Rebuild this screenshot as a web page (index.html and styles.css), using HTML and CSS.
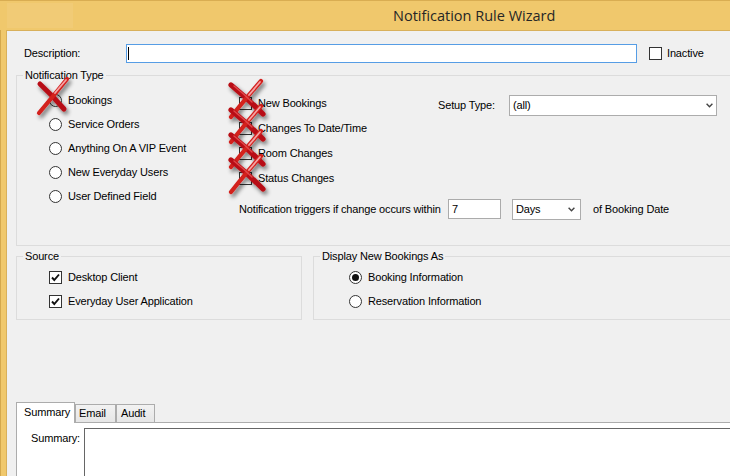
FILE: index.html
```html
<!DOCTYPE html>
<html>
<head>
<meta charset="utf-8">
<title>Notification Rule Wizard</title>
<link rel="stylesheet" href="styles.css">
</head>
<body>
<div class="window">
  <div class="titlebar">
    <div class="title-ghost"></div>
    <span class="title">Notification Rule Wizard</span>
  </div>
  <div class="main">
    <div class="frame"></div>
    <div class="content">
      <div class="desc-row">
        <span class="desc-label">Description:</span>
        <div class="textbox focus"><span class="caret"></span></div>
        <span class="cb inactive-cb"></span>
        <span class="inactive-lbl">Inactive</span>
      </div>

      <fieldset class="group notif">
        <legend>Notification Type</legend>
        <div class="notif-inner">
          <div class="radio-col">
            <div class="opt"><span class="rb"></span><span class="opt-lbl">Bookings</span></div>
            <div class="opt"><span class="rb"></span><span class="opt-lbl">Service Orders</span></div>
            <div class="opt"><span class="rb"></span><span class="opt-lbl">Anything On A VIP Event</span></div>
            <div class="opt"><span class="rb"></span><span class="opt-lbl">New Everyday Users</span></div>
            <div class="opt"><span class="rb"></span><span class="opt-lbl">User Defined Field</span></div>
          </div>
          <div class="right-col">
            <div class="right-top">
              <div class="check-col">
                <div class="opt"><span class="cb"></span><span class="opt-lbl">New Bookings</span></div>
                <div class="opt"><span class="cb"></span><span class="opt-lbl">Changes To Date/Time</span></div>
                <div class="opt"><span class="cb"></span><span class="opt-lbl">Room Changes</span></div>
                <div class="opt"><span class="cb"></span><span class="opt-lbl">Status Changes</span></div>
              </div>
              <div class="setup">
                <span class="setup-label">Setup Type:</span>
                <div class="select setup-select">
                  <span>(all)</span>
                  <svg class="chev" width="7" height="5" viewBox="0 0 7 5"><path d="M0.6 0.8 L3.5 3.8 L6.4 0.8" fill="none" stroke="#444" stroke-width="1.4"/></svg>
                </div>
              </div>
            </div>
            <div class="trigger">
              <span class="trig-label">Notification triggers if change occurs within</span>
              <div class="num">7</div>
              <div class="select days">
                <span>Days</span>
                <svg class="chev" width="7" height="5" viewBox="0 0 7 5"><path d="M0.6 0.8 L3.5 3.8 L6.4 0.8" fill="none" stroke="#444" stroke-width="1.4"/></svg>
              </div>
              <span class="of-lbl">of Booking Date</span>
            </div>
          </div>
        </div>
      </fieldset>

      <div class="groups-row">
        <fieldset class="group source">
          <legend>Source</legend>
          <div class="group-body source-body">
            <div class="opt"><span class="cb"><svg width="11" height="11" viewBox="0 0 11 11"><path d="M2 5.5 L4.3 8 L9 2.5" fill="none" stroke="#111" stroke-width="1.9"/></svg></span><span class="opt-lbl">Desktop Client</span></div>
            <div class="opt"><span class="cb"><svg width="11" height="11" viewBox="0 0 11 11"><path d="M2 5.5 L4.3 8 L9 2.5" fill="none" stroke="#111" stroke-width="1.9"/></svg></span><span class="opt-lbl">Everyday User Application</span></div>
          </div>
        </fieldset>
        <fieldset class="group display">
          <legend>Display New Bookings As</legend>
          <div class="group-body display-body">
            <div class="opt"><span class="rb on"></span><span class="opt-lbl">Booking Information</span></div>
            <div class="opt"><span class="rb"></span><span class="opt-lbl">Reservation Information</span></div>
          </div>
        </fieldset>
      </div>

      <div class="tabs">
        <div class="tab-strip">
          <div class="tab sel">Summary</div>
          <div class="tab email">Email</div>
          <div class="tab audit">Audit</div>
        </div>
        <div class="tab-panel">
          <span class="sum-label">Summary:</span>
          <div class="textarea"></div>
        </div>
      </div>
    </div>
  </div>
</div>

<svg class="marks" width="730" height="476" viewBox="0 0 730 476">
  <defs>
    <filter id="sh" x="-30%" y="-30%" width="180%" height="180%">
      <feGaussianBlur in="SourceAlpha" stdDeviation="2"/>
      <feOffset dx="2" dy="3" result="b"/>
      <feComponentTransfer><feFuncA type="linear" slope="0.55"/></feComponentTransfer>
      <feMerge><feMergeNode/><feMergeNode in="SourceGraphic"/></feMerge>
    </filter>
    <g id="cx">
      <path d="M231 85 Q247 98 263 114" stroke="#b80f17" stroke-width="5.2"/>
      <path d="M261 81 Q247 97 231 117" stroke="#d3201f" stroke-width="4.2"/>
      <path d="M260 82 Q254 89 249 95" stroke="#f5a3a3" stroke-width="1.8"/>
      <path d="M234 86 Q244 94 252 102" stroke="#e2484a" stroke-width="1.4"/>
    </g>
  </defs>
  <g filter="url(#sh)" fill="none" stroke-linecap="round">
    <path d="M40 84 Q52 95 64 109" stroke="#b80f17" stroke-width="5"/>
    <path d="M67 79 Q55 94 39 113" stroke="#d3201f" stroke-width="4.2"/>
    <path d="M66 80 Q60 87 55 93" stroke="#f5a3a3" stroke-width="1.8"/>
    <use href="#cx"/>
    <use href="#cx" y="25"/>
    <use href="#cx" y="50"/>
    <use href="#cx" y="75"/>
  </g>
</svg>
</body>
</html>
```

FILE: styles.css
```css
* { box-sizing: border-box; }
html, body { margin: 0; padding: 0; }
body {
  position: relative;
  width: 730px;
  height: 476px;
  overflow: hidden;
  font: 11px/13px "Liberation Sans", Arial, sans-serif;
  letter-spacing: -0.15px;
  color: #000;
  background: #f0c86c;
}
.window {
  width: 730px;
  height: 476px;
  display: flex;
  flex-direction: column;
  background: #f0c86c;
  border-top: 1px solid #d9ad52;
}
.titlebar {
  height: 29px;
  flex-shrink: 0;
  display: flex;
  align-items: center;
}
.title-ghost {
  width: 66px;
  height: 25px;
  margin-left: 7px;
  background: rgba(255, 255, 255, 0.07);
}
.title {
  margin-left: 320px;
  font: 14.5px "Open Sans", "Liberation Sans", sans-serif;
  letter-spacing: 0;
  color: #262626;
  white-space: nowrap;
}
.main {
  flex: 1;
  display: flex;
  min-height: 0;
}
.frame {
  width: 6px;
  flex-shrink: 0;
  border-left: 1px solid #d4a84c;
  background: #f0c86c;
}
.content {
  flex: 1;
  min-width: 0;
  background: #f0f0f0;
  border-left: 1px solid #d8b05b;
  border-top: 1px solid #d8b05b;
  overflow: hidden;
  display: flex;
  flex-direction: column;
}
.desc-row {
  flex-shrink: 0;
  display: flex;
  align-items: center;
  height: 19px;
  margin-top: 13px;
  padding-left: 17px;
}
.desc-label { width: 102px; flex-shrink: 0; }
.textbox {
  width: 511px;
  height: 19px;
  flex-shrink: 0;
  border: 1px solid #7a7a7a;
  background: #fff;
}
.textbox.focus {
  border-color: #569de5;
  display: flex;
  align-items: center;
  padding-left: 1px;
}
.caret { width: 1px; height: 13px; background: #000; }
.inactive-cb { margin-left: 12px; }
.inactive-lbl { margin-left: 5px; }

.cb {
  width: 13px;
  height: 13px;
  flex-shrink: 0;
  border: 1px solid #333;
  background: #fff;
  display: flex;
  align-items: center;
  justify-content: center;
}
.rb {
  width: 13px;
  height: 13px;
  flex-shrink: 0;
  border: 1px solid #333;
  border-radius: 50%;
  background: #fff;
  display: flex;
  align-items: center;
  justify-content: center;
}
.rb.on::after {
  content: "";
  width: 7px;
  height: 7px;
  border-radius: 50%;
  background: #111;
}
.opt { display: flex; align-items: center; height: 24px; white-space: nowrap; }
.opt-lbl { margin-left: 6px; }

fieldset.group {
  margin: 0;
  padding: 0;
  min-width: 0;
  border: 1px solid #dcdcdc;
  flex-shrink: 0;
}
fieldset.group legend {
  margin-left: 6px;
  padding: 0 2px;
  line-height: 13px;
}
.notif {
  margin: 6px 0 0 9px !important;
  width: 740px;
  height: 177px;
}
.notif-inner {
  display: flex;
  padding-top: 6px;
  padding-left: 32px;
}
.radio-col { width: 190px; flex-shrink: 0; display: flex; flex-direction: column; }
.right-col { display: flex; flex-direction: column; }
.right-top { display: flex; align-items: flex-start; }
.check-col {
  width: 199px;
  flex-shrink: 0;
  padding-top: 3px;
  display: flex;
  flex-direction: column;
}
.check-col .opt { height: 25px; }
.setup { display: flex; align-items: center; margin-top: 7px; }
.setup-label { width: 71px; flex-shrink: 0; }
.select {
  height: 21px;
  flex-shrink: 0;
  border: 1px solid #acacac;
  background: #fff;
  display: flex;
  align-items: center;
  justify-content: space-between;
  padding: 0 3px 0 3px;
}
.setup-select { width: 208px; }
.chev { display: block; }
.trigger { display: flex; align-items: flex-start; margin-top: 8px; white-space: nowrap; }
.trig-label { width: 209px; flex-shrink: 0; line-height: 20px; }
.num {
  width: 53px;
  height: 20px;
  flex-shrink: 0;
  border: 1px solid #ababab;
  background: #fff;
  padding-left: 3px;
  line-height: 18px;
}
.days { width: 69px; margin-left: 11px; padding-right: 5px; }
.of-lbl { margin-left: 12px; line-height: 21px; }

.groups-row {
  flex-shrink: 0;
  display: flex;
  gap: 11px;
  margin: 4px 0 0 9px;
}
.source { width: 286px; height: 70px; }
.display { width: 430px; height: 70px; }
.group-body { display: flex; flex-direction: column; padding-top: 2px; }
.source-body { padding-left: 32px; }
.display-body { padding-left: 35px; }

.tabs {
  flex: 1;
  width: 740px;
  margin: 82px 0 0 9px;
  display: flex;
  flex-direction: column;
}
.tab-strip { display: flex; align-items: flex-end; height: 20px; flex-shrink: 0; }
.tab {
  height: 18px;
  border: 1px solid #acacac;
  border-bottom: none;
  background: linear-gradient(#f2f2f2, #e6e6e6);
  line-height: 17px;
  white-space: nowrap;
}
.tab.sel {
  width: 59px;
  height: 21px;
  margin-bottom: -1px;
  position: relative;
  z-index: 1;
  background: #fff;
  padding-left: 7px;
  line-height: 18px;
}
.tab.email { width: 41px; padding-left: 3px; }
.tab.audit { width: 39px; padding-left: 4px; }
.tab-panel {
  flex: 1;
  border-top: 1px solid #acacac;
  border-left: 1px solid #acacac;
  background: #fff;
  display: flex;
  align-items: flex-start;
  padding-left: 14px;
}
.sum-label { width: 53px; flex-shrink: 0; margin-top: 9px; }
.textarea {
  width: 700px;
  height: 100px;
  flex-shrink: 0;
  margin-top: 5px;
  border: 1px solid #666;
  background: #fff;
}
.marks {
  position: absolute;
  left: 0;
  top: 0;
  pointer-events: none;
}
```
